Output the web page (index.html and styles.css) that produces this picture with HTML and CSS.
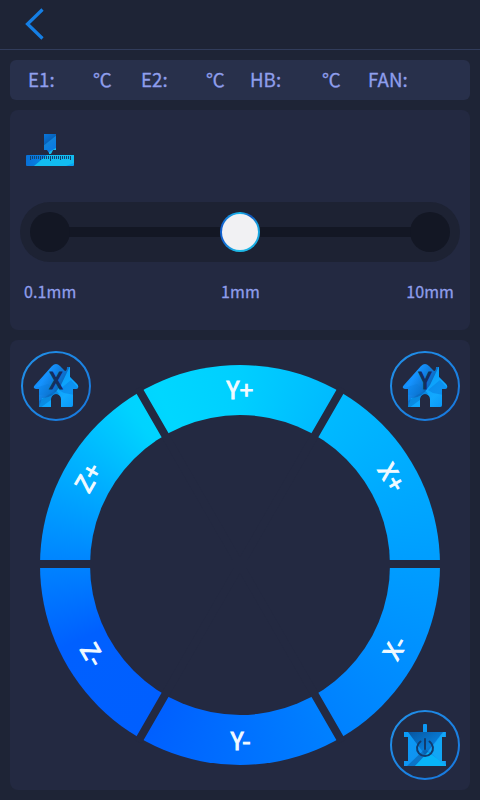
FILE: index.html
```html
<!DOCTYPE html>
<html lang="en">
<head>
<meta charset="utf-8">
<title>Move</title>
<link rel="stylesheet" href="styles.css">
</head>
<body>
<header class="header">
  <svg class="back" width="22" height="34" viewBox="0 0 22 34"><path d="M18.500 2.500 3.500 17 18.500 31.500"/></svg>
</header>
<main class="content">
  <section class="status">
    <span>E1:</span><span>℃</span><span>E2:</span><span>℃</span><span>HB:</span><span>℃</span><span>FAN:</span>
  </section>
  <section class="panel step">
    <svg class="ruler" width="48" height="33" viewBox="0 0 48 33">
      <defs><linearGradient id="nozzle" x2=".5" y2="1"><stop stop-color="#0876dc"/><stop offset=".45" stop-color="#0762ba"/><stop offset=".5" stop-color="#1082da"/><stop offset="1" stop-color="#0879e4"/></linearGradient>
      <linearGradient id="scale"><stop stop-color="#0870d7"/><stop offset="1" stop-color="#08a5f5"/></linearGradient></defs>
      <path fill="url(#nozzle)" d="M18 1h12v16h-3l-2 3h-2l-2-3h-3z"/>
      <path fill="#16bce8" d="M30 15v2h-3l-2 4h-2v-2z"/>
      <rect y="22" width="48" height="11" rx="1" fill="url(#scale)"/>
      <path fill="#12bcf0" d="M8 33 21 22h27v8l-8 3z"/>
      <path stroke="#15416e" d="M4.500 23v4M6.500 23v3M8.500 23v3M10.500 23v3M12.500 23v3M14.500 23v4M16.500 23v3M18.500 23v3M20.500 23v3M22.500 23v3M24.500 23v5M26.500 23v3M28.500 23v3M30.500 23v3M32.500 23v3M34.500 23v4M36.500 23v3M38.500 23v3M40.500 23v3M42.500 23v3M44.500 23v4"/>
    </svg>
    <div class="slider">
      <div class="track"><i class="stop"></i><i class="thumb"></i><i class="stop"></i></div>
    </div>
    <div class="labels"><span>0.1mm</span><span>1mm</span><span>10mm</span></div>
  </section>
  <section class="panel dial">
    <div class="ring"></div>
    <svg class="marks" width="400" height="400" viewBox="-200 -200 400 400">
      <circle class="hub" r="150"/>
      <path class="gap" d="M-202-1H202M-102-176.700 102 176.700M102-176.700-102 176.700"/>
      <text x="0" y="-166">Y+</text>
      <text transform="translate(151 -87) rotate(60)" y="8">X+</text>
      <text transform="translate(156 83) rotate(-60)" y="8">X-</text>
      <text x="1" y="185">Y-</text>
      <text transform="translate(-148 90) rotate(60)" y="8">Z-</text>
      <text transform="translate(-151 -87) rotate(-60)" y="8">Z+</text>
    </svg>
    <svg class="round home-x" width="72" height="72" viewBox="-36 -36 72 72">
      <defs>
        <linearGradient id="roof" x2="1" y2=".6"><stop stop-color="#087bea"/><stop offset=".35" stop-color="#1593ff"/><stop offset=".8" stop-color="#0757a3"/></linearGradient>
        <linearGradient id="wall" x2="1" y2="1"><stop stop-color="#07509a"/><stop offset=".3" stop-color="#079cf8"/><stop offset=".65" stop-color="#12a9ff"/><stop offset="1" stop-color="#078df0"/></linearGradient>
        <linearGradient id="edge" x1="0" y1="0" x2="1" y2="1"><stop stop-color="#2191e9"/><stop offset="1" stop-color="#1777dd"/></linearGradient>
        <clipPath id="house"><path d="M-21-1-4-20Q0-24 4-20L9-15Q11-15 11-19h3v10L21-2Q24 2 20 3h-3v16Q17 21 15 21H5V13A5 5 0 0 0-5 13v8h-12V3h-3Q-24 2-21-1z"/></clipPath>
        <g id="home">
          <circle class="outline" r="34"/>
          <g clip-path="url(#house)">
            <path fill="url(#roof)" d="M-25-25h50v48h-50z"/>
            <path fill="url(#wall)" d="M-18 24-14 12Q-4 13 5-1L14-20h12v44z"/>
            <path fill="#075fae" opacity=".35" d="M-20 22v-5L0 4 3 8-16 22z"/>
            <path fill="#087ade" opacity=".35" d="M-24 3-8-2 1 8-17 9z"/>
            <path fill="#0879df" opacity=".5" d="M3 4 15-6 25 5v5L8 7z"/>
          </g>
        </g>
      </defs>
      <use href="#home"/><text class="axis" y="3">X</text>
    </svg>
    <svg class="round home-y" width="72" height="72" viewBox="-36 -36 72 72">
      <use href="#home"/><text class="axis" y="3">Y</text>
    </svg>
    <svg class="round power" width="72" height="72" viewBox="-36 -36 72 72">
      <defs><linearGradient id="motor" x1="0" y1="0" x2="1" y2="1"><stop stop-color="#07a0fb"/><stop offset="1" stop-color="#1689e9"/></linearGradient>
      <linearGradient id="fold" x2="1" y2="1"><stop stop-color="#07549e"/><stop offset=".6" stop-color="#087bd5"/><stop offset="1" stop-color="#08549b"/></linearGradient>
      <clipPath id="body"><path d="M-21-13h19v-7q0-1 1-1h2q1 0 1 1v7h19v5h-4v24h4v5h-42v-5h4V-8h-4z"/></clipPath></defs>
      <circle class="outline" r="34"/>
      <g clip-path="url(#body)"><path fill="url(#motor)" d="M-25-25h50v48h-50z"/><path fill="url(#fold)" d="M-17-13h35L0 10z"/><path fill="#07559e" d="M-18 21 0 4l5 4-15 13z" opacity=".5"/><path fill="#08b4f8" d="M-10 21 3 7l20 14z"/><path fill="#12a6f5" d="M4 6 20-15v36z"/></g>
      <path class="switch" d="M-4.500-3.500A8 8 0 1 0 4.500-3.500M0-6V4"/>
    </svg>
  </section>
</main>
</body>
</html>
```

FILE: styles.css
```css
* { box-sizing: border-box; }
body {
  margin: 0;
  width: 480px;
  height: 800px;
  overflow: hidden;
  background: #1e2436;
  color: #8f9eec;
  font-family: "Noto Sans CJK SC", "Noto Sans", sans-serif;
}
.header { height: 50px; padding: 7px 0 0 24px; border-bottom: 1px solid #313c5b; }
.back { display: block; fill: none; stroke: #157fe5; stroke-width: 3.2; }
.content { display: flex; flex-direction: column; gap: 10px; padding: 10px; }
.status {
  display: grid;
  grid-template-columns: 65px 48px 65px 44px 72px 46px 1fr;
  height: 40px;
  padding-left: 18px;
  border-radius: 6px;
  background: #28304b;
  font-size: 18.700px;
  line-height: 38px;
  white-space: nowrap;
  -webkit-text-stroke: 0.3px;
}
.panel { border-radius: 8px; background: #232941; }
.step { height: 220px; padding: 23px 10px 0; }
.ruler { display: block; margin-left: 6px; }
.slider { height: 60px; margin-top: 36px; padding: 10px; border-radius: 30px; background: #1d2233; }
.track {
  display: flex;
  justify-content: space-between;
  background: linear-gradient(#131724, #131724) center / 390px 10px no-repeat;
}
.stop, .thumb { width: 40px; height: 40px; border-radius: 50%; background: #131724; }
.thumb {
  border: 2px solid transparent;
  background: linear-gradient(#f1f1f3, #f1f1f3) padding-box,
    conic-gradient(#18b9ed, #1256bd 35deg, #159fdf 65deg, #20bce8 190deg, #1264d0 240deg, #1360ce 290deg, #18b9ed) border-box;
}
.labels {
  display: grid;
  grid-template-columns: 1fr 1fr 1fr;
  margin-top: 17px;
  padding: 0 6px 0 4px;
  font-size: 16px;
  line-height: 25px;
  letter-spacing: 0.1px;
  -webkit-text-stroke: 0.3px;
}
.labels span:nth-child(2) { padding-left: 3px; text-align: center; }
.labels span:last-child { text-align: right; }
.dial { position: relative; height: 450px; padding: 25px 30px; }
.ring {
  width: 400px;
  height: 400px;
  border-radius: 50%;
  background: conic-gradient(#00cfff, #00baff 30deg, #009dff 90deg, #0081ff 150deg, #0070ff 180deg, #005fff 210deg, #0060ff 245deg, #0083ff 270deg, #00acff 298deg, #00d3ff 325deg, #00d7ff 335deg, #00cfff);
}
.marks { position: absolute; left: 30px; top: 25px; }
.hub { fill: #232941; }
.gap { stroke: #232941; stroke-width: 8; }
.marks text { fill: #f2faff; stroke: #f2faff; stroke-width: 1; font-size: 24px; letter-spacing: 0.5px; text-anchor: middle; }
.round { position: absolute; }
.home-x { left: 10px; top: 10px; }
.home-y { left: 379px; top: 10px; }
.power { left: 379px; top: 369px; }
.outline { fill: #232941; stroke: url(#edge); stroke-width: 2; }
.axis { fill: #152e5c; stroke: #152e5c; stroke-width: 1.2; font-size: 23px; text-anchor: middle; }
.switch { fill: none; stroke: #123b6c; stroke-width: 2; stroke-linecap: round; }
```
